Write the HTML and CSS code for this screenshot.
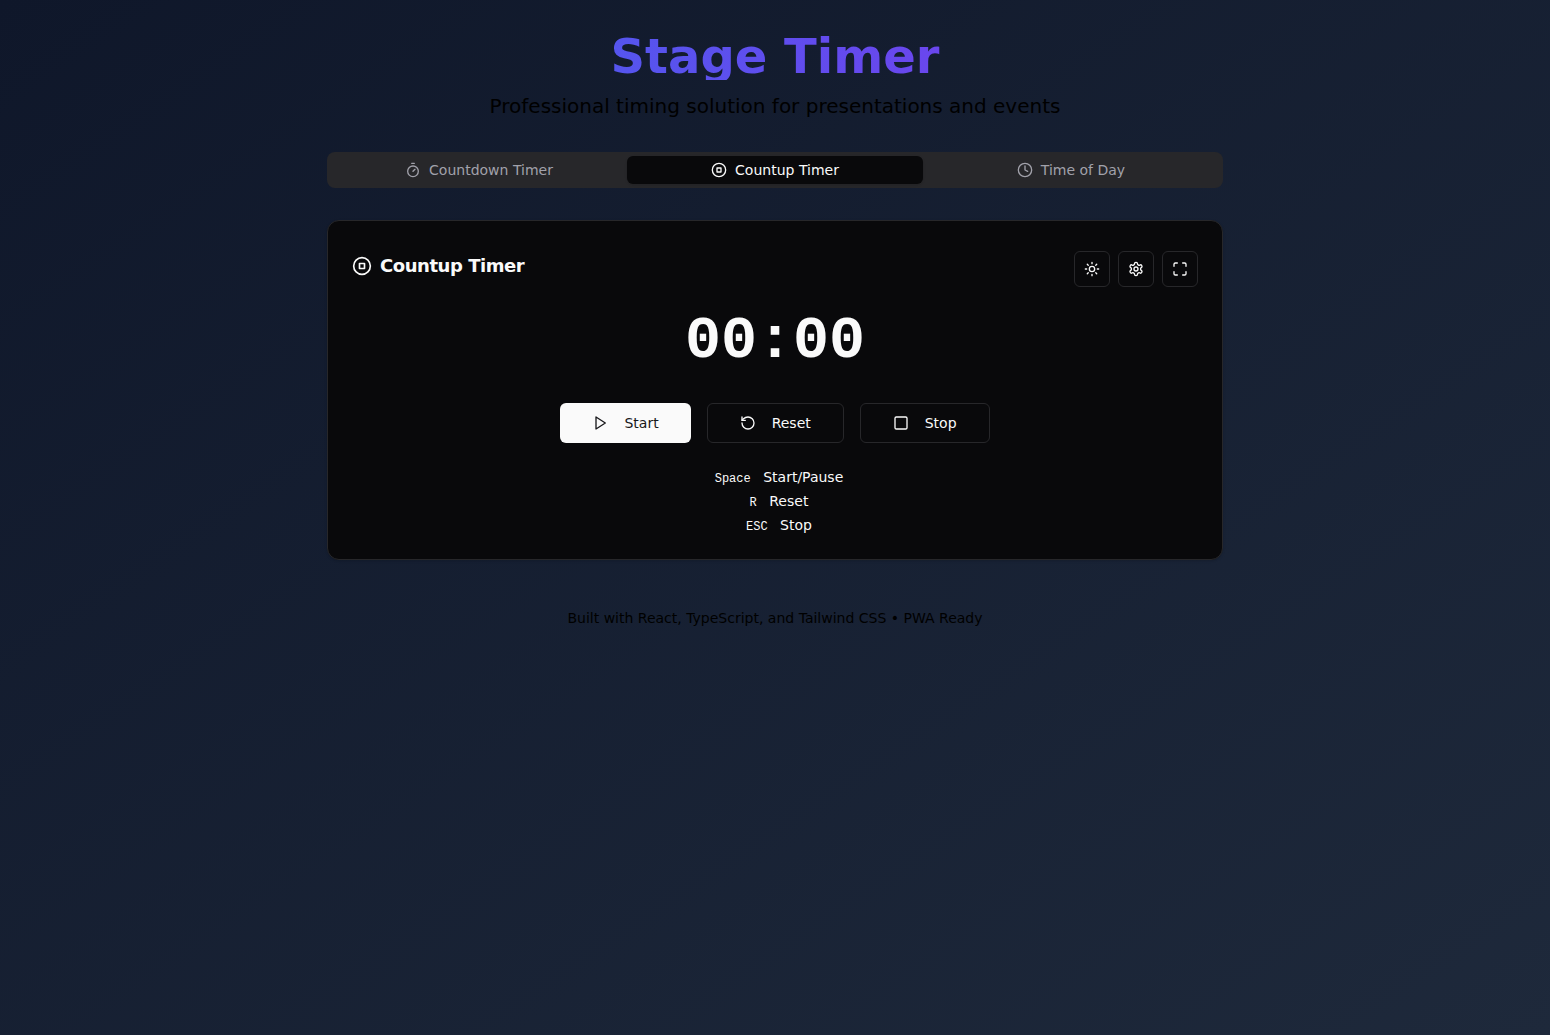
FILE: index.html
```html
<!DOCTYPE html>
<html lang="en">
<head>
<meta charset="utf-8">
<title>Stage Timer</title>
<link rel="stylesheet" href="styles.css">
</head>
<body>
<div class="container">
  <header class="hero">
    <h1 class="hero-title">Stage Timer</h1>
    <p class="hero-subtitle">Professional timing solution for presentations and events</p>
  </header>

  <nav class="tabs">
    <button class="tab">
      <svg class="icon" viewBox="0 0 24 24"><line x1="10" x2="14" y1="2" y2="2"/><line x1="12" x2="15" y1="14" y2="11"/><circle cx="12" cy="14" r="8"/></svg>
      Countdown Timer
    </button>
    <button class="tab tab-active">
      <svg class="icon" viewBox="0 0 24 24"><circle cx="12" cy="12" r="10"/><rect x="9" y="9" width="6" height="6"/></svg>
      Countup Timer
    </button>
    <button class="tab">
      <svg class="icon" viewBox="0 0 24 24"><circle cx="12" cy="12" r="10"/><polyline points="12 6 12 12 16 14"/></svg>
      Time of Day
    </button>
  </nav>

  <main class="card">
    <div class="card-header">
      <h2 class="card-title">
        <svg class="icon icon-lg" viewBox="0 0 24 24"><circle cx="12" cy="12" r="10"/><rect x="9" y="9" width="6" height="6"/></svg>
        Countup Timer
      </h2>
      <div class="toolbar">
        <button class="icon-button" aria-label="Theme">
          <svg class="icon" viewBox="0 0 24 24"><circle cx="12" cy="12" r="4"/><path d="M12 2v2M12 20v2M4.93 4.93l1.41 1.41M17.66 17.66l1.41 1.41M2 12h2M20 12h2M6.34 17.66l-1.41 1.41M19.07 4.93l-1.41 1.41"/></svg>
        </button>
        <button class="icon-button" aria-label="Settings">
          <svg class="icon" viewBox="0 0 24 24"><path d="M12.22 2h-.44a2 2 0 0 0-2 2v.18a2 2 0 0 1-1 1.73l-.43.25a2 2 0 0 1-2 0l-.15-.08a2 2 0 0 0-2.73.73l-.22.38a2 2 0 0 0 .73 2.73l.15.1a2 2 0 0 1 1 1.72v.51a2 2 0 0 1-1 1.74l-.15.09a2 2 0 0 0-.73 2.73l.22.38a2 2 0 0 0 2.73.73l.15-.08a2 2 0 0 1 2 0l.43.25a2 2 0 0 1 1 1.73V20a2 2 0 0 0 2 2h.44a2 2 0 0 0 2-2v-.18a2 2 0 0 1 1-1.73l.43-.25a2 2 0 0 1 2 0l.15.08a2 2 0 0 0 2.73-.73l.22-.39a2 2 0 0 0-.73-2.73l-.15-.08a2 2 0 0 1-1-1.74v-.5a2 2 0 0 1 1-1.74l.15-.09a2 2 0 0 0 .73-2.73l-.22-.38a2 2 0 0 0-2.73-.73l-.15.08a2 2 0 0 1-2 0l-.43-.25a2 2 0 0 1-1-1.73V4a2 2 0 0 0-2-2z"/><circle cx="12" cy="12" r="3"/></svg>
        </button>
        <button class="icon-button" aria-label="Fullscreen">
          <svg class="icon" viewBox="0 0 24 24"><path d="M8 3H5a2 2 0 0 0-2 2v3M21 8V5a2 2 0 0 0-2-2h-3M3 16v3a2 2 0 0 0 2 2h3M16 21h3a2 2 0 0 0 2-2v-3"/></svg>
        </button>
      </div>
    </div>

    <div class="time">00:00</div>

    <div class="actions">
      <button class="button button-primary">
        <svg class="icon" viewBox="0 0 24 24"><polygon points="6 3 20 12 6 21 6 3"/></svg>
        Start
      </button>
      <button class="button">
        <svg class="icon" viewBox="0 0 24 24"><path d="M3 12a9 9 0 1 0 9-9 9.75 9.75 0 0 0-6.74 2.74L3 8"/><path d="M3 3v5h5"/></svg>
        Reset
      </button>
      <button class="button">
        <svg class="icon" viewBox="0 0 24 24"><rect x="3" y="3" width="18" height="18" rx="2"/></svg>
        Stop
      </button>
    </div>

    <div class="shortcuts">
      <p><kbd>Space</kbd> Start/Pause</p>
      <p><kbd>R</kbd> Reset</p>
      <p><kbd>ESC</kbd> Stop</p>
    </div>
  </main>

  <footer class="footer">Built with React, TypeScript, and Tailwind CSS • PWA Ready</footer>
</div>
</body>
</html>
```
FILE: styles.css
```css
*, *::before, *::after { box-sizing: border-box; }

h1, h2, p { margin: 0; }

body {
  margin: 0;
  min-height: 100vh;
  font-family: "DejaVu Sans", sans-serif;
  font-size: 14px;
  line-height: 20px;
  color: #000;
  background: linear-gradient(to bottom right, #0f172a, #1e293b);
}

button {
  font: inherit;
  font-weight: 500;
  color: inherit;
  background: none;
  border: 0;
  padding: 0;
}

.container {
  width: 896px;
  margin: 0 auto;
  padding-top: 32px;
}

.icon {
  width: 16px;
  height: 16px;
  flex-shrink: 0;
  fill: none;
  stroke: currentColor;
  stroke-width: 2;
  stroke-linecap: round;
  stroke-linejoin: round;
}

.icon-lg { width: 20px; height: 20px; }

.hero { text-align: center; margin-bottom: 32px; }

.hero-title {
  margin-bottom: 12px;
  font-size: 48px;
  line-height: 48px;
  font-weight: 700;
  color: transparent;
  background: linear-gradient(90deg, #4361ee, #7c3aed);
  background-clip: text;
  -webkit-background-clip: text;
}

.hero-subtitle { font-size: 20px; line-height: 28px; }

.tabs {
  display: grid;
  grid-template-columns: repeat(3, 1fr);
  height: 36px;
  padding: 4px;
  margin-bottom: 32px;
  border-radius: 8px;
  background: #27272a;
  color: #a1a1aa;
}

.tab {
  display: flex;
  align-items: center;
  justify-content: center;
  gap: 8px;
  border-radius: 6px;
}

.tab-active {
  color: #fafafa;
  background: #09090b;
  box-shadow: 0 1px 3px rgb(0 0 0 / 0.1), 0 1px 2px -1px rgb(0 0 0 / 0.1);
}

.card {
  height: 340px;
  padding: 30px 24px 0;
  border: 1px solid #27272a;
  border-radius: 12px;
  background: #09090b;
  color: #fafafa;
  box-shadow: 0 1px 3px rgb(0 0 0 / 0.1), 0 1px 2px -1px rgb(0 0 0 / 0.1);
}

.card-header {
  display: flex;
  align-items: flex-start;
  justify-content: space-between;
}

.card-title {
  display: flex;
  align-items: center;
  gap: 8px;
  height: 30px;
  font-size: 18px;
  line-height: 28px;
  font-weight: 600;
  letter-spacing: -0.45px;
}

.toolbar { display: flex; gap: 8px; }

.icon-button {
  display: flex;
  align-items: center;
  justify-content: center;
  width: 36px;
  height: 36px;
  border: 1px solid #27272a;
  border-radius: 6px;
}

.time {
  margin-top: 24px;
  font-family: "Liberation Mono", monospace;
  font-size: 60px;
  line-height: 60px;
  font-weight: 700;
  text-align: center;
}

.actions {
  display: flex;
  justify-content: center;
  gap: 16px;
  margin-top: 32px;
}

.button {
  display: flex;
  align-items: center;
  gap: 16px;
  height: 40px;
  padding: 0 32px;
  border: 1px solid #27272a;
  border-radius: 6px;
}

.button-primary {
  border: 0;
  background: #fafafa;
  color: #18181b;
}

.shortcuts {
  display: grid;
  grid-auto-rows: 20px;
  gap: 4px;
  margin-top: 24px;
  text-align: center;
}

kbd {
  padding: 4px 8px;
  font-family: "Liberation Mono", monospace;
  font-size: 12px;
}

.footer { margin-top: 48px; text-align: center; }
```
